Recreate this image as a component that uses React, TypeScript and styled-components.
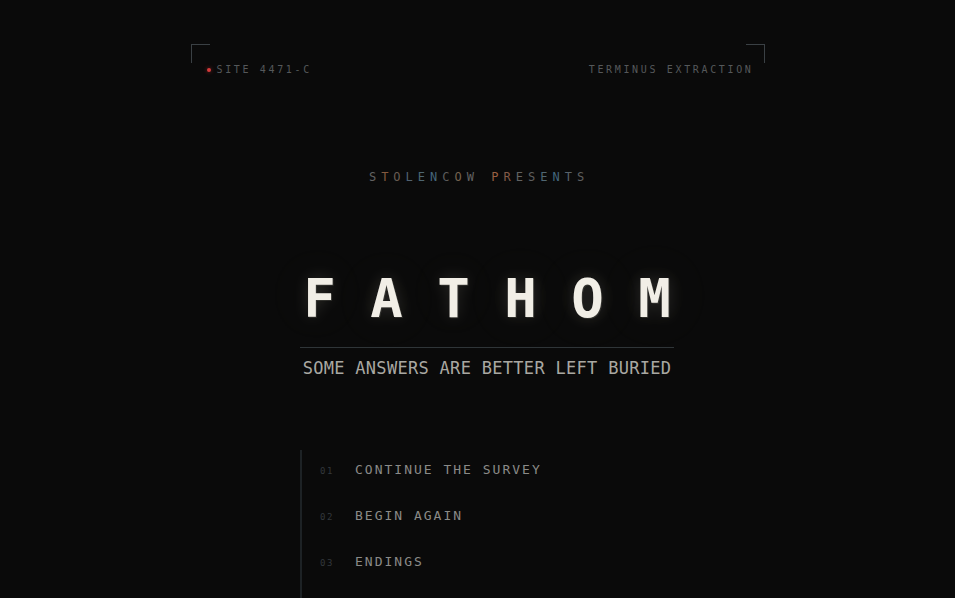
import React from 'react'
import styled, { createGlobalStyle } from 'styled-components'

const GlobalStyle = createGlobalStyle`
  html, body {
    margin: 0;
    padding: 0;
    background: #0a0a0a;
    overflow: hidden;
  }
  body {
    font-family: 'DejaVu Sans Mono', 'Liberation Mono', monospace;
    color: #8a8a8a;
  }
`

const Page = styled.div`
  min-height: 598px;
  display: flex;
  flex-direction: column;
  align-items: center;
  padding-top: 44px;
  box-sizing: border-box;
`

const Frame = styled.header`
  position: relative;
  width: 574px;
  box-sizing: border-box;
  padding: 21px 11px 0 16px;
  display: flex;
  justify-content: space-between;
  align-items: center;

  &::before,
  &::after {
    content: '';
    position: absolute;
    top: 0;
    width: 18px;
    height: 18px;
    border-top: 1px solid #3a4044;
  }

  &::before {
    left: 0;
    border-left: 1px solid #3a4044;
  }

  &::after {
    right: 0;
    border-right: 1px solid #3a4044;
  }
`

const Tag = styled.span`
  display: inline-flex;
  align-items: center;
  font-size: 10px;
  line-height: 10px;
  letter-spacing: 2.65px;
  color: #55585a;
`

const Dot = styled.i`
  width: 4px;
  height: 4px;
  border-radius: 50%;
  background: #d63a3a;
  box-shadow: 0 0 4px rgba(214, 58, 58, 0.6);
  margin-right: 6px;
`

const Presents = styled.div`
  margin-top: 95px;
  margin-right: 2px;
  font-size: 12px;
  line-height: 14px;
  letter-spacing: 5px;
  padding-left: 5px;
`

const Glyph = styled.span<{ tint: string }>`
  color: ${(props) => props.tint};
`

const Main = styled.main`
  width: 374px;
  margin-left: 19px;
  display: flex;
  flex-direction: column;
`

const Title = styled.h1`
  align-self: center;
  margin: 88px -34.5px 0 0;
  font-size: 54px;
  line-height: 54px;
  font-weight: 700;
  letter-spacing: 34.5px;
  white-space: nowrap;
  color: #f1eee6;
  text-shadow:
    1px 1px 0 rgba(110, 108, 100, 0.3),
    0 0 16px rgba(240, 235, 220, 0.16),
    0 0 60px rgba(240, 235, 220, 0.1);
`

const Rule = styled.hr`
  margin: 21px 0 0;
  border: 0;
  height: 1px;
  background: #2f3538;
`

const Tagline = styled.p`
  margin: 12px 0 0;
  font-size: 17px;
  line-height: 16px;
  letter-spacing: 0.3px;
  text-align: center;
  color: #a9a8a2;
`

const Menu = styled.ol`
  list-style: none;
  margin: 74px 0 0;
  padding: 0 0 60px 18px;
  border-left: 2px solid #1d2225;
`

const Item = styled.li`
  height: 46px;
  box-sizing: border-box;
  padding-top: 13px;
  display: flex;
  align-items: baseline;
  line-height: 14px;
`

const Num = styled.span`
  width: 35px;
  font-size: 9px;
  letter-spacing: 1.6px;
  color: #33383c;
`

const Label = styled.span`
  font-size: 13px;
  letter-spacing: 2px;
  color: #8a8a88;
`

const presents: [string, string][] = [
  ['S', '#626262'],
  ['T', '#84593e'],
  ['O', '#685c52'],
  ['L', '#526270'],
  ['E', '#4e6672'],
  ['N', '#46667a'],
  ['C', '#5c5c5c'],
  ['O', '#74624f'],
  ['W', '#626262'],
  [' ', '#626262'],
  ['P', '#995f42'],
  ['R', '#845a48'],
  ['E', '#626262'],
  ['S', '#5e5e5e'],
  ['E', '#506672'],
  ['N', '#44667e'],
  ['T', '#58626a'],
  ['S', '#5e5e5e'],
]

const items = ['CONTINUE THE SURVEY', 'BEGIN AGAIN', 'ENDINGS']

const App = () => {
  return (
    <Page>
      <GlobalStyle />
      <Frame>
        <Tag>
          <Dot />
          SITE 4471-C
        </Tag>
        <Tag>TERMINUS EXTRACTION</Tag>
      </Frame>
      <Presents>
        {presents.map(([ch, tint], i) => (
          <Glyph key={i} tint={tint}>{ch}</Glyph>
        ))}
      </Presents>
      <Main>
        <Title>FATHOM</Title>
        <Rule />
        <Tagline>SOME ANSWERS ARE BETTER LEFT BURIED</Tagline>
        <Menu>
          {items.map((label, i) => (
            <Item key={label}>
              <Num>0{i + 1}</Num>
              <Label>{label}</Label>
            </Item>
          ))}
        </Menu>
      </Main>
    </Page>
  )
}

export default App
